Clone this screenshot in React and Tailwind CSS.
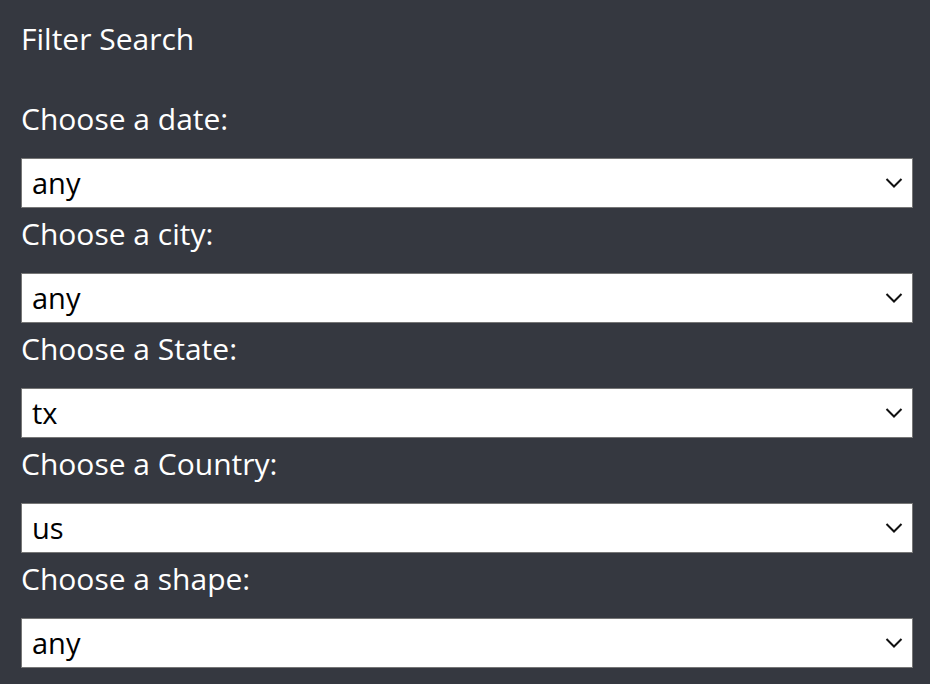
const filters = [
  { label: 'Choose a date:', value: 'any' },
  { label: 'Choose a city:', value: 'any' },
  { label: 'Choose a State:', value: 'tx' },
  { label: 'Choose a Country:', value: 'us' },
  { label: 'Choose a shape:', value: 'any' },
]

function Chevron() {
  return (
    <svg
      className="pointer-events-none absolute right-[10px] top-1/2 -translate-y-1/2"
      width="18"
      height="11"
      viewBox="0 0 18 11"
      fill="none"
    >
      <path d="M1.5 1.5 L9 9 L16.5 1.5" stroke="#111" strokeWidth="2" />
    </svg>
  )
}

export default function App() {
  return (
    <div
      className="min-h-[684px] w-[930px] bg-[#353840] pt-[21px] pl-[21px] text-white"
      style={{ fontFamily: '"Open Sans", "Noto Sans", sans-serif' }}
    >
      <h5 className="mb-[36px] text-[30px] leading-[36px] font-normal">Filter Search</h5>
      <form className="flex flex-col">
        {filters.map((f) => (
          <div key={f.label} className="flex flex-col">
            <label className="mt-[5px] mb-[18px] text-[30px] leading-[42px]">{f.label}</label>
            <div className="relative w-[892px]">
              <select
                defaultValue={f.value}
                className="block h-[50px] w-full appearance-none rounded-none border border-[#767676] bg-white pl-[10px] text-[29px] text-black outline-none"
                style={{ fontFamily: '"Open Sans", "Noto Sans", sans-serif' }}
              >
                <option value={f.value}>{f.value}</option>
              </select>
              <Chevron />
            </div>
          </div>
        ))}
      </form>
    </div>
  )
}
